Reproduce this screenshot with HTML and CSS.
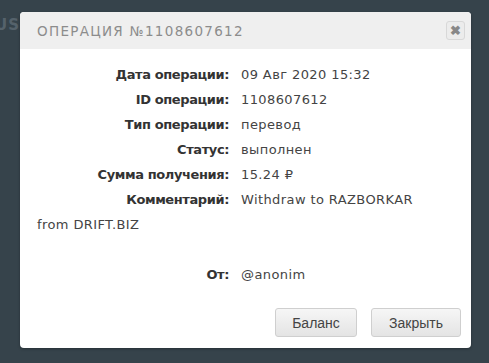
FILE: index.html
```html
<!DOCTYPE html>
<html lang="ru">
<head>
  <meta charset="UTF-8">
  <title>Операция №1108607612</title>
  <link rel="stylesheet" href="styles.css">
</head>
<body>
  <div class="page">
    <div class="page-title">STATUS</div>
  </div>

  <div class="modal">
    <div class="modal-header">
      <span class="modal-title">Операция №1108607612</span>
      <button class="close">&#10006;</button>
    </div>

    <div class="modal-body">
      <div class="row"><span class="label">Дата операции:</span>09 Авг 2020 15:32</div>
      <div class="row"><span class="label">ID операции:</span>1108607612</div>
      <div class="row"><span class="label">Тип операции:</span>перевод</div>
      <div class="row"><span class="label">Статус:</span>выполнен</div>
      <div class="row"><span class="label">Сумма получения:</span>15.24 &#8381;</div>
      <div class="row"><span class="label">Комментарий:</span>Withdraw to RAZBORKAR from DRIFT.BIZ</div>
      <div class="row"><br></div>
      <div class="row"><span class="label">От:</span>@anonim</div>
    </div>

    <div class="modal-footer">
      <button class="btn">Баланс</button>
      <button class="btn btn-wide">Закрыть</button>
    </div>
  </div>
</body>
</html>
```

FILE: styles.css
```css
body {
  margin: 0;
  background: #36434b;
  font-family: "DejaVu Sans", sans-serif;
  height: 363px;
  overflow: hidden;
}

.page {
  padding: 16px 0 0;
}

.page-title {
  width: 20px;
  overflow: hidden;
  direction: rtl;
  color: #55626b;
  font-size: 15px;
  font-weight: bold;
  letter-spacing: 1px;
}

.modal {
  position: absolute;
  left: 20px;
  top: 12px;
  width: 451px;
  background: #fff;
  border-radius: 4px;
  box-shadow: 0 1px 3px rgba(0, 0, 0, 0.3);
  overflow: hidden;
}

.modal-header {
  display: flex;
  align-items: center;
  justify-content: space-between;
  height: 37px;
  padding: 0 6px 0 17px;
  background: #efefef;
}

.modal-title {
  text-transform: uppercase;
  color: #8c8c8c;
  font-size: 13.5px;
  letter-spacing: 1.3px;
}

.close {
  width: 19px;
  height: 19px;
  padding: 0;
  margin-top: -1px;
  border: 1px solid #d8d8d8;
  border-radius: 3px;
  background: #ececec;
  color: #888;
  font-size: 13px;
  font-weight: bold;
  line-height: 17px;
  text-align: center;
}

.modal-body {
  padding: 13px 34px 0 17px;
  font-size: 13px;
  line-height: 25px;
  color: #444;
  letter-spacing: 0.4px;
}

.label {
  display: inline-block;
  width: 192px;
  margin-right: 12px;
  text-align: right;
  font-weight: bold;
  color: #333;
  letter-spacing: -0.4px;
}

.modal-footer {
  display: flex;
  justify-content: flex-end;
  gap: 14px;
  padding: 21px 10px 11px;
}

.btn {
  height: 29px;
  width: 82px;
  padding: 0;
  border: 1px solid #cfcfcf;
  border-radius: 3px;
  background: linear-gradient(#f6f6f6, #e4e4e4);
  font-family: "Liberation Sans", Arial, sans-serif;
  font-size: 14px;
  color: #444;
}

.btn-wide {
  width: 90px;
}
```
